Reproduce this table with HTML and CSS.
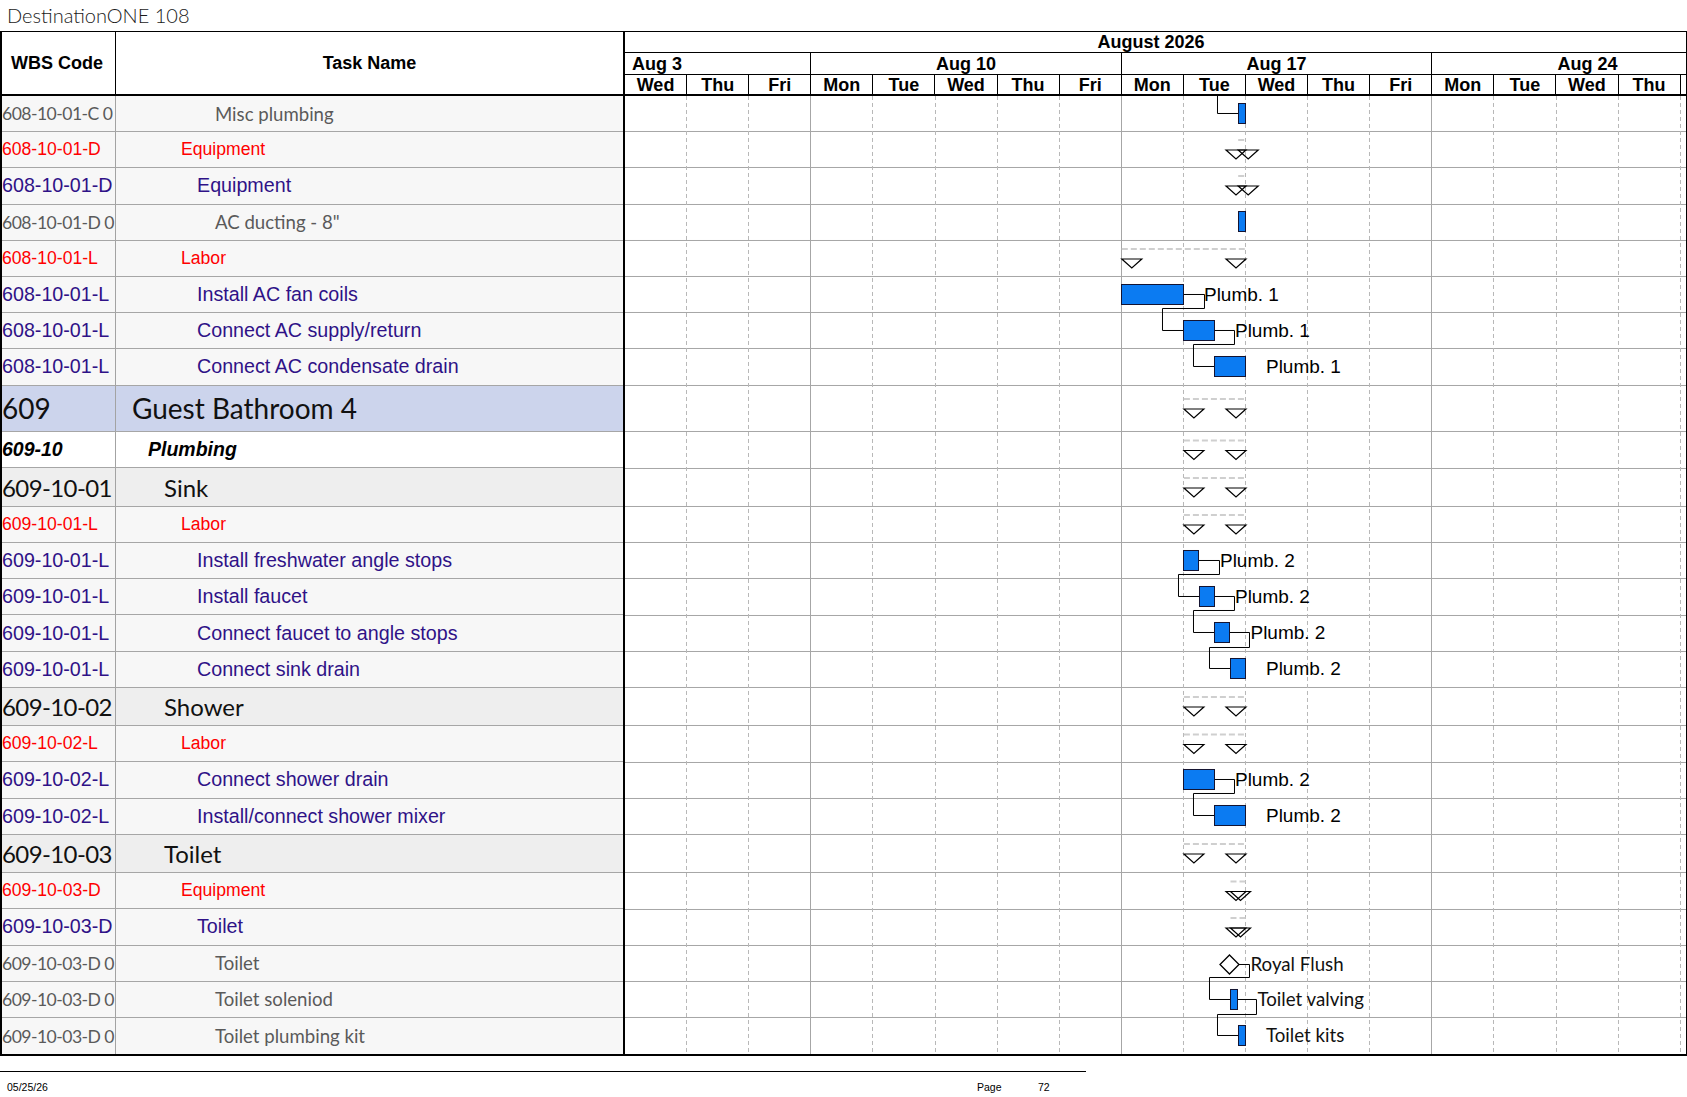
FILE: index.html
```html
<!DOCTYPE html>
<html>
<head>
<meta charset="utf-8">
<title>DestinationONE 108</title>
<link rel="stylesheet" href="styles.css">
</head>
<body>
<div class="title">DestinationONE 108</div>
<div class="sheet">
  <div class="head">
    <div class="hwbs">WBS Code</div>
    <div class="htask">Task Name</div>
    <div class="scale">
      <div class="month"><span>August 2026</span></div>
      <div class="weeks">
        <div class="wk wk-first">Aug 3</div>
        <div class="wk">Aug 10</div>
        <div class="wk">Aug 17</div>
        <div class="wk wk-last"><span>Aug 24</span></div>
      </div>
      <div class="days">
        <div>Wed</div><div>Thu</div><div>Fri</div>
        <div>Mon</div><div>Tue</div><div>Wed</div><div>Thu</div><div>Fri</div>
        <div>Mon</div><div>Tue</div><div>Wed</div><div>Thu</div><div>Fri</div>
        <div>Mon</div><div>Tue</div><div>Wed</div><div>Thu</div>
        <div class="sliver"></div>
      </div>
    </div>
  </div>
  <div class="body">
    <div class="tbl">
      <div class="r gray"><div class="wbs"><span>608-10-01-C 0</span></div><div class="tn">Misc plumbing</div></div>
      <div class="r red"><div class="wbs"><span>608-10-01-D</span></div><div class="tn">Equipment</div></div>
      <div class="r pur"><div class="wbs"><span>608-10-01-D</span></div><div class="tn">Equipment</div></div>
      <div class="r gray"><div class="wbs"><span>608-10-01-D 0</span></div><div class="tn">AC ducting - 8"</div></div>
      <div class="r red"><div class="wbs"><span>608-10-01-L</span></div><div class="tn">Labor</div></div>
      <div class="r pur"><div class="wbs"><span>608-10-01-L</span></div><div class="tn">Install AC fan coils</div></div>
      <div class="r pur"><div class="wbs"><span>608-10-01-L</span></div><div class="tn">Connect AC supply/return</div></div>
      <div class="r pur"><div class="wbs"><span>608-10-01-L</span></div><div class="tn">Connect AC condensate drain</div></div>
      <div class="r grp"><div class="wbs"><span>609</span></div><div class="tn">Guest Bathroom 4</div></div>
      <div class="r l2"><div class="wbs"><span>609-10</span></div><div class="tn">Plumbing</div></div>
      <div class="r lvl"><div class="wbs"><span>609-10-01</span></div><div class="tn">Sink</div></div>
      <div class="r red"><div class="wbs"><span>609-10-01-L</span></div><div class="tn">Labor</div></div>
      <div class="r pur"><div class="wbs"><span>609-10-01-L</span></div><div class="tn">Install freshwater angle stops</div></div>
      <div class="r pur"><div class="wbs"><span>609-10-01-L</span></div><div class="tn">Install faucet</div></div>
      <div class="r pur"><div class="wbs"><span>609-10-01-L</span></div><div class="tn">Connect faucet to angle stops</div></div>
      <div class="r pur"><div class="wbs"><span>609-10-01-L</span></div><div class="tn">Connect sink drain</div></div>
      <div class="r lvl"><div class="wbs"><span>609-10-02</span></div><div class="tn">Shower</div></div>
      <div class="r red"><div class="wbs"><span>609-10-02-L</span></div><div class="tn">Labor</div></div>
      <div class="r pur"><div class="wbs"><span>609-10-02-L</span></div><div class="tn">Connect shower drain</div></div>
      <div class="r pur"><div class="wbs"><span>609-10-02-L</span></div><div class="tn">Install/connect shower mixer</div></div>
      <div class="r lvl"><div class="wbs"><span>609-10-03</span></div><div class="tn">Toilet</div></div>
      <div class="r red"><div class="wbs"><span>609-10-03-D</span></div><div class="tn">Equipment</div></div>
      <div class="r pur"><div class="wbs"><span>609-10-03-D</span></div><div class="tn">Toilet</div></div>
      <div class="r gray"><div class="wbs"><span>609-10-03-D 0</span></div><div class="tn">Toilet</div></div>
      <div class="r gray"><div class="wbs"><span>609-10-03-D 0</span></div><div class="tn">Toilet soleniod</div></div>
      <div class="r gray"><div class="wbs"><span>609-10-03-D 0</span></div><div class="tn">Toilet plumbing kit</div></div>
    </div>
    <svg class="gantt" width="1061" height="958.4" viewBox="0 0 1061 958.4" xmlns="http://www.w3.org/2000/svg">
      <path class="hl" d="M0 35.5H1061M0 71.5H1061M0 108.5H1061M0 144.5H1061M0 180.5H1061M0 216.5H1061M0 252.5H1061M0 289.5H1061M0 335.5H1061M0 372.5H1061M0 410.5H1061M0 446.5H1061M0 482.5H1061M0 519.5H1061M0 555.5H1061M0 591.5H1061M0 629.5H1061M0 666.5H1061M0 702.5H1061M0 738.5H1061M0 776.5H1061M0 813.5H1061M0 849.5H1061M0 885.5H1061M0 921.5H1061"/>
      <path class="dl" d="M61.5 0V958.4M123.5 0V958.4M247.5 0V958.4M310.5 0V958.4M372.5 0V958.4M434.5 0V958.4M558.5 0V958.4M620.5 0V958.4M682.5 0V958.4M744.5 0V958.4M868.5 0V958.4M931.5 0V958.4M993.5 0V958.4M1055.5 0V958.4"/>
      <path class="wl" d="M185.5 0V958.4M496.5 0V958.4M806.5 0V958.4"/>

      <!-- summary dashed lines -->
      <path class="sum" d="M613.2 44H621M613.2 80H621M496.8 153H621M558.9 303H621M558.9 344.5H621M558.9 382H621M558.9 419H621M558.9 601H621M558.9 638.5H621M558.9 748H621M605.5 785.5H621M605.5 822H621"/>

      <!-- summary triangles -->
      <polygon class="tri" points="601,54 621,54 611,63"/><polygon class="tri" points="613.2,54 633.2,54 623.2,63"/>
      <polygon class="tri" points="601,90 621,90 611,99"/><polygon class="tri" points="613.2,90 633.2,90 623.2,99"/>
      <polygon class="tri" points="496.8,163 516.8,163 506.8,172"/><polygon class="tri" points="601,163 621,163 611,172"/>
      <polygon class="tri" points="558.9,313 578.9,313 568.9,322"/><polygon class="tri" points="601,313 621,313 611,322"/>
      <polygon class="tri" points="558.9,354.5 578.9,354.5 568.9,363.5"/><polygon class="tri" points="601,354.5 621,354.5 611,363.5"/>
      <polygon class="tri" points="558.9,392 578.9,392 568.9,401"/><polygon class="tri" points="601,392 621,392 611,401"/>
      <polygon class="tri" points="558.9,429 578.9,429 568.9,438"/><polygon class="tri" points="601,429 621,429 611,438"/>
      <polygon class="tri" points="558.9,611 578.9,611 568.9,620"/><polygon class="tri" points="601,611 621,611 611,620"/>
      <polygon class="tri" points="558.9,648.5 578.9,648.5 568.9,657.5"/><polygon class="tri" points="601,648.5 621,648.5 611,657.5"/>
      <polygon class="tri" points="558.9,758 578.9,758 568.9,767"/><polygon class="tri" points="601,758 621,758 611,767"/>
      <polygon class="tri" points="601,795.5 621,795.5 611,804.5"/><polygon class="tri" points="605.5,795.5 625.5,795.5 615.5,804.5"/>
      <polygon class="tri" points="601,832 621,832 611,841"/><polygon class="tri" points="605.5,832 625.5,832 615.5,841"/>

      <!-- links -->
      <path class="lnk" d="M592.5 0V17.5H613.5"/>
      <path class="lnk" d="M558.5 198.5H579.5V212.5H537.5V234.5H558.5"/>
      <path class="lnk" d="M589.5 234.5H609.5V248.5H568.5V270.5H589.5"/>
      <path class="lnk" d="M573.5 464.5H594.5V478.5H553.5V500.5H574.5"/>
      <path class="lnk" d="M589.5 500.5H609.5V514.5H568.5V536.5H589.5"/>
      <path class="lnk" d="M604.5 536.5H624.5V551.5H584.5V572.5H605.5"/>
      <path class="lnk" d="M589.5 683.5H609.5V697.5H568.5V719.5H589.5"/>
      <path class="lnk" d="M614 868.5H624.5V881.5H584.5V903.5H605.5"/>
      <path class="lnk" d="M612.5 903.5H631.5V918.5H592.5V939.5H613.5"/>

      <!-- task bars -->
      <rect class="bar" x="613.5" y="7.5" width="7" height="20"/>
      <rect class="bar" x="613.5" y="115.5" width="7" height="20"/>
      <rect class="bar" x="496.5" y="188.5" width="62" height="20"/>
      <rect class="bar" x="558.5" y="224.5" width="31" height="20"/>
      <rect class="bar" x="589.5" y="260.5" width="31" height="20"/>
      <rect class="bar" x="558.5" y="454.5" width="15" height="20"/>
      <rect class="bar" x="574.5" y="490.5" width="15" height="20"/>
      <rect class="bar" x="589.5" y="526.5" width="15" height="20"/>
      <rect class="bar" x="605.5" y="562.5" width="15" height="20"/>
      <rect class="bar" x="558.5" y="673.5" width="31" height="20"/>
      <rect class="bar" x="589.5" y="709.5" width="31" height="20"/>
      <rect class="bar" x="605.5" y="893.5" width="7" height="20"/>
      <rect class="bar" x="613.5" y="929.5" width="7" height="20"/>

      <!-- milestone -->
      <polygon class="ms" points="604.5,859 614,868.5 604.5,878 595,868.5"/>

      <!-- labels -->
      <text class="lbl" x="579" y="205.5">Plumb. 1</text>
      <text class="lbl" x="610" y="241.5">Plumb. 1</text>
      <text class="lbl" x="641" y="277.5">Plumb. 1</text>
      <text class="lbl" x="595" y="471.5">Plumb. 2</text>
      <text class="lbl" x="610" y="507.5">Plumb. 2</text>
      <text class="lbl" x="625.5" y="543.5">Plumb. 2</text>
      <text class="lbl" x="641" y="579.5">Plumb. 2</text>
      <text class="lbl" x="610" y="690.5">Plumb. 2</text>
      <text class="lbl" x="641" y="726.5">Plumb. 2</text>
      <text class="lbl2" x="625.5" y="875.5">Royal Flush</text>
      <text class="lbl2" x="632.5" y="910.5">Toilet valving</text>
      <text class="lbl2" x="641" y="946.5">Toilet kits</text>
    </svg>
  </div>
</div>
<div class="foot"><span class="fdate">05/25/26</span><span class="fpage">Page</span><span>72</span></div>
</body>
</html>
```

FILE: styles.css
```css
* { box-sizing: border-box; }

body {
  margin: 0;
  width: 1687px;
  background: #fff;
  color: #000;
  font-family: "Liberation Sans", Arial, sans-serif;
}

.title {
  height: 31px;
  line-height: 30px;
  padding-left: 7px;
  font-family: Lato, "Open Sans", sans-serif;
  font-weight: 300;
  font-size: 20px;
  color: #1a1a1a;
  white-space: nowrap;
}

.sheet {
  width: 1687px;
  border-top: 1px solid #000;
  border-left: 2px solid #000;
  border-right: 1px solid #000;
  border-bottom: 2px solid #000;
}

/* ---------- header ---------- */
.head {
  display: flex;
  height: 64px;
  border-bottom: 2px solid #000;
  font-weight: bold;
  font-size: 18px;
  white-space: nowrap;
}

.hwbs {
  width: 114px;
  border-right: 1px solid #000;
  display: flex;
  align-items: center;
  justify-content: center;
  padding-right: 3px;
}

.htask {
  width: 509px;
  border-right: 2px solid #000;
  display: flex;
  align-items: center;
  justify-content: center;
}

.scale {
  width: 1061px;
  display: flex;
  flex-direction: column;
}

.month {
  height: 21px;
  border-bottom: 1px solid #000;
  display: flex;
  align-items: center;
  justify-content: center;
  padding-right: 9px;
  line-height: 1;
}

.weeks {
  height: 22px;
  border-bottom: 1px solid #000;
  display: grid;
  grid-template-columns: 186.3px 310.5px 310.5px 1fr;
  line-height: 1;
}

.wk {
  border-right: 1px solid #000;
  display: flex;
  align-items: center;
  justify-content: center;
  overflow: hidden;
}

.wk-first {
  justify-content: flex-start;
  padding-left: 7px;
}

.wk-last {
  border-right: none;
  justify-content: flex-start;
}

.wk-last span {
  flex: 0 0 310.5px;
  text-align: center;
}

.days {
  height: 19px;
  display: grid;
  grid-template-columns: repeat(17, 62.1px) 1fr;
  line-height: 1;
}

.days div {
  border-right: 1px solid #000;
  display: flex;
  align-items: center;
  justify-content: center;
  overflow: hidden;
}

.days .sliver { border-right: none; }

/* ---------- body ---------- */
.body {
  display: flex;
}

.tbl {
  width: 623px;
  border-right: 2px solid #000;
}

.r {
  display: grid;
  grid-template-columns: 114px 1fr;
  height: 36.2px;
  border-bottom: 1px solid #a6a6a6;
  background: #f7f7f7;
  white-space: nowrap;
}

.r:last-child { border-bottom: none; }

.wbs {
  border-right: 1px solid #a3a3a3;
  overflow: hidden;
  display: flex;
  align-items: center;
}

.tn {
  overflow: hidden;
  display: flex;
  align-items: center;
}

.gray {
  color: #5a5a5a;
  font-family: Lato, sans-serif;
  font-size: 18.6px;
}
.gray .wbs span {
  font-size: 17.6px;
  letter-spacing: -0.55px;
}
.gray .tn { padding-left: 99px; }

.red {
  color: #f00;
  font-size: 17.6px;
}
.red .tn { padding-left: 65px; }

.pur {
  color: #2f1287;
  font-size: 19.7px;
}
.pur .tn { padding-left: 81px; }

.grp {
  height: 46.8px;
  background: #ccd4ec;
  color: #111;
  font-family: Lato, sans-serif;
  font-size: 28px;
}
.grp .tn { padding-left: 16px; }

.l2 {
  background: #fff;
  font-weight: bold;
  font-style: italic;
  font-size: 19.5px;
}
.l2 .tn { padding-left: 32px; }

.lvl {
  height: 38.4px;
  background: #eeeeee;
  color: #111;
  font-family: Lato, sans-serif;
  font-size: 24px;
}
.lvl .wbs span { letter-spacing: -0.6px; }
.lvl .tn { padding-left: 48px; }

/* ---------- gantt ---------- */
.gantt { display: block; }

.hl { stroke: #a6a6a6; stroke-width: 1; fill: none; }
.dl { stroke: #b8b8b8; stroke-width: 1; stroke-dasharray: 4 3; fill: none; }
.wl { stroke: #a6a6a6; stroke-width: 1; fill: none; }

.sum { stroke: #cfcfcf; stroke-width: 2; stroke-dasharray: 6 3; fill: none; }
.tri { fill: none; stroke: #000; stroke-width: 1.2; }
.lnk { fill: none; stroke: #000; stroke-width: 1; }
.bar { fill: #0b7bf2; stroke: #141432; stroke-width: 1; }
.ms { fill: #fff; stroke: #000; stroke-width: 1.3; }

.lbl {
  font-family: "Liberation Sans", Arial, sans-serif;
  font-size: 19px;
  fill: #000;
}

.lbl2 {
  font-family: Lato, sans-serif;
  font-size: 18.7px;
  fill: #111;
}

/* ---------- footer ---------- */
.foot {
  width: 1086px;
  margin-top: 15px;
  border-top: 1px solid #000;
  display: flex;
  padding-left: 7px;
  padding-top: 9px;
  font-size: 10.5px;
  line-height: 12px;
  color: #000;
}

.fdate { width: 970px; }
.fpage { width: 61px; }
```
